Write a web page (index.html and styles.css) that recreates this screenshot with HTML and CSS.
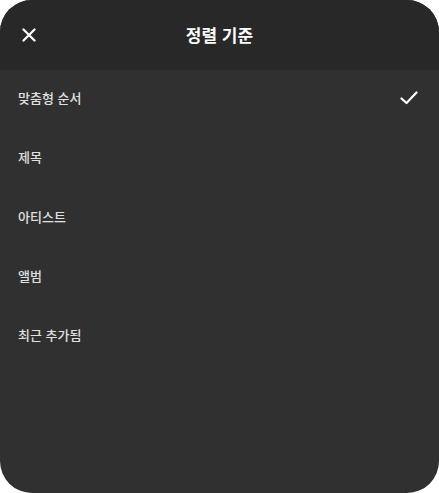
FILE: index.html
```html
<!DOCTYPE html>
<html lang="ko">
<head>
<meta charset="utf-8">
<link rel="stylesheet" href="styles.css">
</head>
<body>
<div class="sheet">
  <header class="header">
    <button class="close" aria-label="닫기">
      <svg width="14" height="14" viewBox="0 0 14 14"><path d="M1.5 1.5 L12.5 12.5 M12.5 1.5 L1.5 12.5" stroke="#fff" stroke-width="2.2" stroke-linecap="round" fill="none"/></svg>
    </button>
    <h1 class="title">정렬 기준</h1>
  </header>
  <ul class="list">
    <li class="item">맞춤형 순서
      <svg class="check" width="18" height="14" viewBox="0 0 18 14"><path d="M1.5 7.5 L6.5 12 L16.5 1.5" stroke="#fff" stroke-width="2.2" stroke-linecap="round" stroke-linejoin="round" fill="none"/></svg>
    </li>
    <li class="item">제목</li>
    <li class="item">아티스트</li>
    <li class="item">앨범</li>
    <li class="item">최근 추가됨</li>
  </ul>
</div>
</body>
</html>
```

FILE: styles.css
```css
html, body {
  margin: 0;
  padding: 0;
  background: #ffffff;
}
body {
  font-family: "Noto Sans CJK KR", "Noto Sans", sans-serif;
  width: 439px;
  height: 493px;
}
.sheet {
  width: 439px;
  height: 493px;
  background: #303030;
  border-radius: 32px;
  overflow: hidden;
  display: flex;
  flex-direction: column;
}
.header {
  height: 70px;
  background: #282828;
  display: flex;
  align-items: center;
  justify-content: center;
  position: relative;
}
.close {
  position: absolute;
  left: 22px;
  top: 28px;
  width: 14px;
  height: 14px;
  padding: 0;
  border: 0;
  background: none;
  display: flex;
}
.title {
  margin: 0;
  color: #ffffff;
  font-size: 17px;
  font-weight: 700;
  line-height: 20px;
  margin-top: -1px;
}
.list {
  list-style: none;
  margin: 0;
  padding: 0;
}
.item {
  height: 59.25px;
  box-sizing: border-box;
  display: flex;
  align-items: center;
  justify-content: space-between;
  padding: 0 21px 3px 18px;
  color: #e0e0e0;
  font-size: 13px;
  font-weight: 500;
  line-height: 18px;
}
.check {
  display: block;
}
```
